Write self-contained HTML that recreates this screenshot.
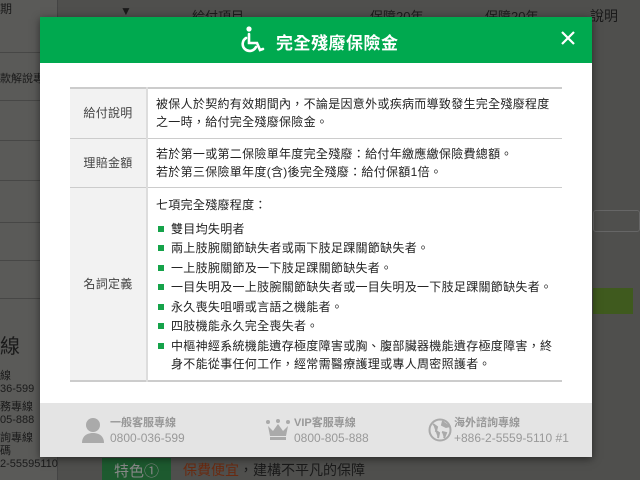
<!DOCTYPE html>
<html><head><meta charset="utf-8"><style>
*{margin:0;padding:0;box-sizing:border-box}
html,body{width:640px;height:480px;overflow:hidden}
body{position:relative;background:#4f4f4d;font-family:"Liberation Sans","Noto Sans CJK TC",sans-serif;color:#222}
.bg{position:absolute;color:#1a1a1a;font-size:12px;white-space:nowrap}
.side{position:absolute;left:0;top:0;width:58px;height:480px;background:#5a5a58;border-right:1px solid #444}
.side div{position:absolute;left:0;width:58px;height:1px;background:#474746}
.modal{position:absolute;left:40px;top:17px;width:552px;height:440px;background:#fff;box-shadow:0 2px 8px rgba(0,0,0,.5)}
.hd{height:46px;background:#00a94f;color:#fff;position:relative}
.hd .t{position:absolute;left:236px;top:12px;font-size:17px;font-weight:bold;letter-spacing:0.5px}
.hd .x{position:absolute;right:16px;top:13px}
table{position:absolute;left:30px;top:70px;width:492px;border-collapse:collapse;font-size:12px;letter-spacing:0.3px;border-top:2px solid #ccc;border-bottom:2px solid #ccc}
td{border-top:1px solid #ccc;vertical-align:middle;line-height:18px}
td.l{width:77px;background:#f2f2f2;color:#444;text-align:center;border-right:2px solid #ddd}
td.c{padding:5px 8px}
ul{list-style:none}
li{position:relative;padding-left:15px;line-height:18px;margin-bottom:1.5px}
li:before{content:"";position:absolute;left:2px;top:6px;width:6px;height:6px;background:#15a34a}
.ft{position:absolute;left:0;top:386px;width:552px;height:54px;background:#e4e4e4;color:#999;font-size:11px;font-weight:bold}
.ft .i{position:absolute;top:13px;line-height:15px;white-space:nowrap}
</style></head><body>
<div class="side"><div style="top:52px"></div><div style="top:100px"></div><div style="top:140px"></div><div style="top:180px"></div><div style="top:222px"></div><div style="top:260px"></div><div style="top:298px"></div></div>
<div class="bg" style="left:0;top:0">期</div>
<div class="bg" style="left:120px;top:4px">▼</div>
<div class="bg" style="left:192px;top:6px;font-size:13px">給付項目</div>
<div class="bg" style="left:370px;top:6px;font-size:13px">保障20年</div>
<div class="bg" style="left:485px;top:6px;font-size:13px">保障20年</div>
<div class="bg" style="left:590px;top:6px;font-size:14px">說明</div>
<div class="bg" style="left:0;top:70px;font-size:11px">款解說專</div>
<div class="bg" style="left:0;top:330px;font-size:20px">線</div>
<div class="bg" style="left:0;top:367px;font-size:11px">線<br>36-599</div>
<div class="bg" style="left:0;top:398px;font-size:11px">務專線<br>05-888</div>
<div class="bg" style="left:0;top:432px;font-size:11px;line-height:13px">詢專線<br>碼<br>2-55595110</div>
<div class="bg" style="left:593px;top:210px;width:47px;height:22px;border:1px solid #666;border-radius:3px"></div>
<div class="bg" style="left:593px;top:288px;width:40px;height:26px;background:#3f5a1e"></div>
<div class="bg" style="left:102px;top:458px;width:69px;height:22px;background:#1d5a2f;color:#888;font-size:15px;padding:2px 0 0 12px">特色①</div>
<div class="bg" style="left:183px;top:460px;font-size:14px"><span style="color:#6a2a10">保費便宜</span>，建構不平凡的保障</div>
<div class="modal">
<div class="hd">
<svg style="position:absolute;left:201px;top:9px" width="28" height="28" viewBox="0 0 28 28" fill="none" stroke="#fff" stroke-width="2.6" stroke-linecap="round"><circle cx="8" cy="3" r="2.6" fill="#fff" stroke="none"/><path d="M8 8v9h8l3 7 3-1"/><path d="M5 12a7 7 0 1 0 10 9"/></svg>
<div class="t">完全殘廢保險金</div>
<svg class="x" width="16" height="16" viewBox="0 0 16 16" stroke="#fff" stroke-width="2.2"><path d="M2 2L14 14M14 2L2 14"/></svg>
</div>
<table>
<tr><td class="l" style="height:50px">給付說明</td><td class="c">被保人於契約有效期間內，不論是因意外或疾病而導致發生完全殘廢程度之一時，給付完全殘廢保險金。</td></tr>
<tr><td class="l" style="height:49px">理賠金額</td><td class="c">若於第一或第二保險單年度完全殘廢：給付年繳應繳保險費總額。<br>若於第三保險單年度(含)後完全殘廢：給付保額1倍。</td></tr>
<tr><td class="l">名詞定義</td><td class="c" style="padding-top:8px;padding-bottom:6px">七項完全殘廢程度：
<ul style="margin-top:6px">
<li>雙目均失明者</li>
<li>兩上肢腕關節缺失者或兩下肢足踝關節缺失者。</li>
<li>一上肢腕關節及一下肢足踝關節缺失者。</li>
<li>一目失明及一上肢腕關節缺失者或一目失明及一下肢足踝關節缺失者。</li>
<li>永久喪失咀嚼或言語之機能者。</li>
<li>四肢機能永久完全喪失者。</li>
<li>中樞神經系統機能遺存極度障害或胸、腹部臟器機能遺存極度障害，終身不能從事任何工作，經常需醫療護理或專人周密照護者。</li>
</ul></td></tr>
</table>
<div class="ft">
<svg style="position:absolute;left:42px;top:14px" width="22" height="26" viewBox="0 0 22 26" fill="#aaa"><circle cx="11" cy="8" r="7"/><path d="M0 26c0-7 5-10 11-10s11 3 11 10z"/></svg>
<div class="i" style="left:70px">一般客服專線<br><span style="font-size:12px;font-weight:normal">0800-036-599</span></div>
<svg style="position:absolute;left:226px;top:16px" width="24" height="22" viewBox="0 0 24 22" fill="#aaa"><circle cx="2" cy="3" r="2"/><circle cx="12" cy="2" r="2"/><circle cx="22" cy="3" r="2"/><path d="M2 7l5 5 5-7 5 7 5-5-2 10H4z"/><rect x="4" y="18" width="16" height="3"/></svg>
<div class="i" style="left:254px">VIP客服專線<br><span style="font-size:12px;font-weight:normal">0800-805-888</span></div>
<svg style="position:absolute;left:388px;top:15px" width="24" height="24" viewBox="0 0 24 24" fill="none" stroke="#aaa" stroke-width="2"><circle cx="12" cy="12" r="10.5"/><path d="M5 6l4 3-1 4 3 2-1 5M15 3l-1 4 4 2 4-1M14 14l4 1-2 5" fill="#aaa"/></svg>
<div class="i" style="left:414px">海外諮詢專線<br><span style="font-size:12px;font-weight:normal">+886-2-5559-5110 #1</span></div>
</div>
</div>
</body></html>
